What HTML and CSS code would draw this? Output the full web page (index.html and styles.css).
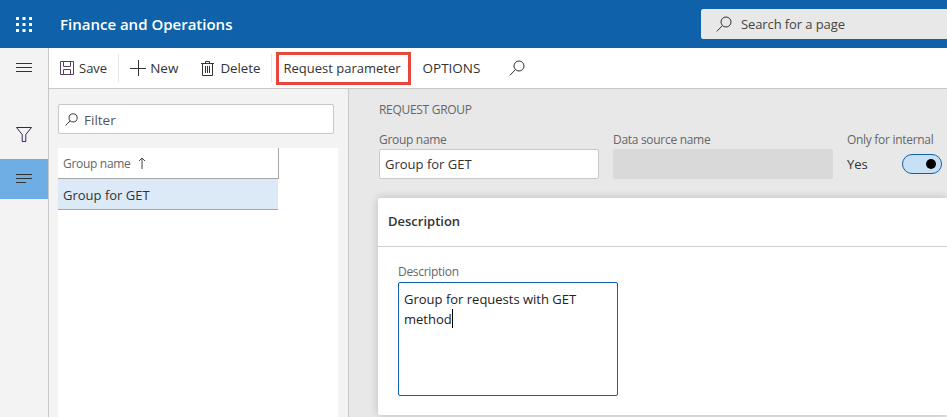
FILE: index.html
```html
<!DOCTYPE html>
<html lang="en">
  <head>
    <meta charset="UTF-8" />
    <title>Finance and Operations</title>
    <link rel="stylesheet" href="styles.css">
  </head>
  <body>
    <header class="topbar">
      <div class="waffle">
        <svg width="16" height="16" viewBox="0 0 16 16" fill="#fff">
          <rect x="0" y="1" width="3" height="3"/><rect x="6.5" y="1" width="3" height="3"/><rect x="13" y="1" width="3" height="3"/>
          <rect x="0" y="7" width="3" height="3"/><rect x="6.5" y="7" width="3" height="3"/><rect x="13" y="7" width="3" height="3"/>
          <rect x="0" y="13" width="3" height="3"/><rect x="6.5" y="13" width="3" height="3"/><rect x="13" y="13" width="3" height="3"/>
        </svg>
      </div>
      <div class="app-name">Finance and Operations</div>
      <div class="page-search">
        <svg class="icon" width="16" height="16" viewBox="0 0 16 16" fill="none" stroke="#333" stroke-width="1">
          <circle cx="10" cy="6" r="5"/><path d="M6.4 9.6 L0.8 15.4"/>
        </svg>
        <span>Search for a page</span>
      </div>
    </header>
    <div class="body-row">
      <nav class="rail">
        <div class="rail-item rail-menu">
          <svg width="16" height="10" viewBox="0 0 16 10" stroke="#333" stroke-width="1"><path d="M0 .5H16M0 4.5H16M0 8.5H16"/></svg>
        </div>
        <div class="rail-item rail-filter">
          <svg width="16" height="15" viewBox="0 0 16 15" fill="none" stroke="#402050" stroke-width="1"><path d="M.5 .5H15.5L9.8 7.5V14.5H6.2V7.5Z"/></svg>
        </div>
        <div class="rail-item rail-list">
          <svg width="16" height="10" viewBox="0 0 16 10" stroke="#333" stroke-width="1"><path d="M0 .5H16M0 4.5H16M0 8.5H10"/></svg>
        </div>
      </nav>
      <div class="workspace">
        <div class="toolbar">
          <button class="tool tool-save">
            <svg width="14" height="14" viewBox="0 0 14 14" fill="none" stroke="#5b3f66" stroke-width="1"><path d="M.5 .5H13.5V13.5H.5ZM3.5 .5V5.5H10.5V.5M3.5 13.5V8.5H10.5V13.5"/></svg>
            Save
          </button>
          <span class="sep"></span>
          <button class="tool tool-new">
            <svg width="16" height="16" viewBox="0 0 16 16" stroke="#333" stroke-width="1"><path d="M0 8.5H16M8.5 0V16"/></svg>
            New
          </button>
          <button class="tool tool-delete">
            <svg width="13" height="15" viewBox="0 0 13 15" fill="none" stroke="#333" stroke-width="1"><path d="M0 2.5H13M1.5 2.5V14.5H11.5V2.5M4.5 2.5V.5H8.5V2.5M4.5 5V12M6.5 5V12M8.5 5V12"/></svg>
            Delete
          </button>
          <span class="sep"></span>
          <button class="tool tool-request">Request parameter</button>
          <button class="tool tool-options">OPTIONS</button>
          <button class="tool tool-find">
            <svg width="16" height="16" viewBox="0 0 16 16" fill="none" stroke="#333" stroke-width="1"><circle cx="10" cy="6" r="5"/><path d="M6.4 9.6 L0.8 15.4"/></svg>
          </button>
        </div>
        <div class="content">
          <aside class="list-pane">
            <div class="filter">
              <svg width="13" height="13" viewBox="0 0 16 16" fill="none" stroke="#333" stroke-width="1.2"><circle cx="10" cy="6" r="5"/><path d="M6.4 9.6 L0.8 15.4"/></svg>
              <span class="filter-text">Filter</span>
            </div>
            <div class="grid">
              <div class="grid-head">Group name <span class="sort">
                <svg width="8" height="12" viewBox="0 0 8 12" fill="none" stroke="#444" stroke-width="1"><path d="M4 12V1M1 4L4 1L7 4"/></svg>
              </span></div>
              <div class="grid-row">Group for GET</div>
            </div>
          </aside>
          <main class="details">
            <div class="section-title">REQUEST GROUP</div>
            <div class="fields">
              <div class="field">
                <label>Group name</label>
                <div class="input">Group for GET</div>
              </div>
              <div class="field">
                <label>Data source name</label>
                <div class="input input-disabled"></div>
              </div>
              <div class="field field-toggle">
                <label>Only for internal</label>
                <div class="toggle-row">
                  <span>Yes</span>
                  <span class="toggle"><span class="knob"></span></span>
                </div>
              </div>
            </div>
            <section class="card">
              <h2 class="card-title">Description</h2>
              <div class="card-body">
                <label>Description</label>
                <div class="textarea">Group for requests with GET method<span class="caret"></span></div>
              </div>
            </section>
          </main>
        </div>
      </div>
    </div>
  </body>
</html>
```
FILE: styles.css
```css
* {
  margin: 0;
  padding: 0;
  box-sizing: border-box;
}
html,
body {
  height: 417px;
  overflow: hidden;
}
body {
  font-family: "Open Sans", "Noto Sans", sans-serif;
  font-size: 13px;
  color: #333;
  background-color: #f3f3f3;
}
.topbar {
  display: flex;
  align-items: center;
  height: 48px;
  background-color: #0f62a9;
  color: #fff;
}
.waffle {
  display: flex;
  width: 60px;
  padding-left: 16px;
}
.app-name {
  font-size: 15px;
  font-weight: 600;
}
.page-search {
  display: flex;
  align-items: center;
  gap: 9px;
  width: 246px;
  height: 30px;
  margin-left: auto;
  padding-left: 15px;
  background-color: #e8e8e8;
  border-radius: 2px 0 0 2px;
  color: #444;
  letter-spacing: -0.1px;
}
.body-row {
  display: flex;
  height: 369px;
}
.rail {
  width: 49px;
  background-color: #f3f3f3;
  border-right: 1px solid #c8c8c8;
}
.rail-item {
  display: flex;
  justify-content: center;
  align-items: center;
  width: 48px;
}
.rail-menu {
  height: 40px;
  margin-bottom: 26px;
}
.rail-filter {
  height: 40px;
  margin-bottom: 5px;
}
.rail-list {
  height: 40px;
  background-color: #6eaee4;
}
.workspace {
  flex: 1;
  display: flex;
  flex-direction: column;
}
.toolbar {
  display: flex;
  align-items: center;
  height: 41px;
  padding-left: 11px;
  background-color: #fff;
  border-bottom: 1px solid #c8c8c8;
}
.tool {
  display: flex;
  align-items: center;
  gap: 5px;
  border: none;
  background: none;
  color: #333;
  font-family: inherit;
  font-size: 13px;
}
.sep {
  width: 1px;
  height: 28px;
  background-color: #e4e4e4;
}
.tool-save {
  margin-right: 11px;
}
.tool-new {
  gap: 4px;
  margin-left: 11px;
  font-size: 13.5px;
}
.tool-delete {
  gap: 6px;
  margin-left: 23px;
  margin-right: 10px;
  font-size: 13.3px;
}
.tool-request {
  justify-content: center;
  width: 135px;
  height: 33px;
  margin-left: 4px;
  padding-right: 2px;
  border: 3px solid #e8453c;
}
.tool-options {
  margin-left: 12px;
  font-size: 13.5px;
}
.tool-find {
  margin-left: 29px;
}
.content {
  flex: 1;
  display: flex;
  min-height: 0;
}
.list-pane {
  width: 300px;
  padding: 15px 14px 0 9px;
  background-color: #f3f3f3;
  border-right: 1px solid #c8c8c8;
}
.filter {
  display: flex;
  align-items: center;
  gap: 6px;
  height: 30px;
  padding-left: 6px;
  margin-bottom: 14px;
  background-color: #fff;
  border: 1px solid #c8c8c8;
  border-radius: 2px;
  color: #555;
  font-size: 13.5px;
}
.filter-text {
  padding-top: 1px;
}
.grid {
  height: 269px;
  margin-right: -4px;
  background-color: #fff;
}
.grid-head {
  display: flex;
  align-items: center;
  gap: 7px;
  width: 221px;
  height: 31px;
  padding-left: 5px;
  border-right: 1px solid #a6a6a6;
  border-bottom: 1px solid #a6a6a6;
  color: #666;
  font-size: 12px;
  letter-spacing: -0.3px;
}
.sort {
  display: flex;
}
.grid-row {
  display: flex;
  align-items: center;
  width: 220px;
  height: 31px;
  padding-left: 5px;
  padding-top: 1px;
  background-color: #dceaf8;
  border-bottom: 1px solid #a6a6a6;
}
.details {
  flex: 1;
  padding: 12px 0 0 30px;
  background-color: #e8e8e8;
  min-width: 0;
}
.section-title {
  height: 16px;
  font-size: 12px;
  letter-spacing: -0.3px;
  color: #666;
}
.fields {
  display: flex;
  gap: 14px;
  margin-top: 14px;
}
.field label,
.card-body label {
  display: block;
  height: 18px;
  font-size: 12px;
  letter-spacing: -0.3px;
  color: #666;
}
.card-body label {
  height: 19px;
}
.field {
  width: 220px;
}
.input {
  display: flex;
  align-items: center;
  height: 30px;
  padding-left: 5px;
  background-color: #fff;
  border: 1px solid #c8c8c8;
  border-radius: 2px;
}
.input-disabled {
  background-color: #d9d9d9;
  border-color: #d9d9d9;
}
.field-toggle {
  width: 95px;
}
.toggle-row {
  display: flex;
  align-items: center;
  justify-content: space-between;
  height: 30px;
}
.toggle {
  display: flex;
  align-items: center;
  justify-content: flex-end;
  width: 40px;
  height: 20px;
  padding-right: 5px;
  background-color: #c7e0f4;
  border: 1px solid #0f62a9;
  border-radius: 10px;
}
.knob {
  width: 10px;
  height: 10px;
  background-color: #000;
  border-radius: 50%;
}
.card {
  height: 217px;
  margin-top: 19px;
  margin-left: -1px;
  background-color: #fff;
  border-radius: 2px 0 0 2px;
  box-shadow: 0 0 8px rgba(0, 0, 0, 0.2);
}
.card-title {
  display: flex;
  align-items: center;
  height: 49px;
  padding-left: 10px;
  padding-bottom: 2px;
  border-bottom: 1px solid #d0d0d0;
  font-size: 13px;
  font-weight: 600;
}
.card-body {
  padding: 16px 0 0 20px;
}
.textarea {
  width: 220px;
  height: 114px;
  padding: 6px 5px;
  background-color: #fff;
  border: 1px solid #0f62a9;
  border-radius: 2px;
  line-height: 20px;
  color: #222;
}
.caret {
  display: inline-block;
  width: 1px;
  height: 19px;
  background-color: #000;
  vertical-align: top;
}
```
